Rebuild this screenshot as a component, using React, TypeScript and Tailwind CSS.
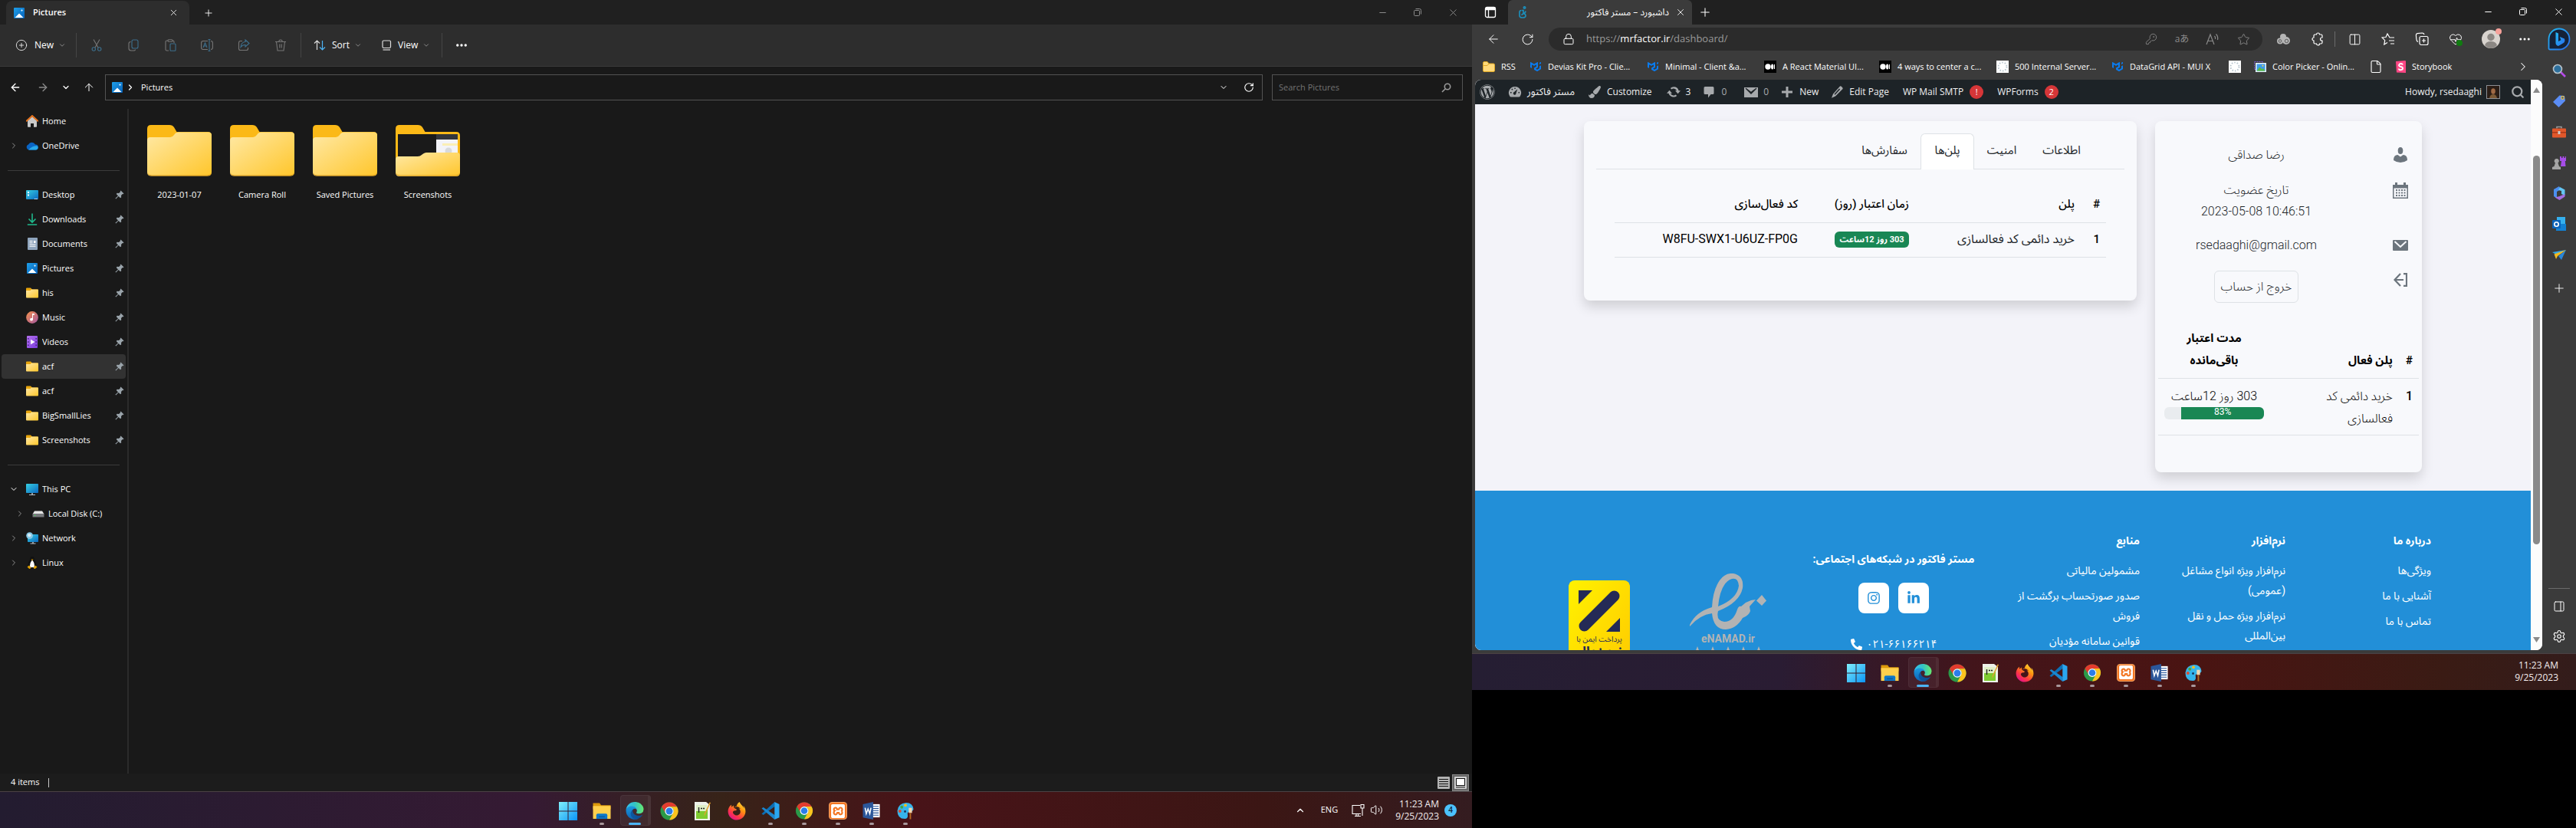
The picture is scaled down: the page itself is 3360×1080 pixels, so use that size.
import React from "react";
import {
  ArrowLeft, ArrowRight, ArrowUp, ChevronDown, ChevronRight, ChevronUp, Ellipsis, X, Plus, Minus,
  Star, KeyRound, Lock, RotateCw, Columns2, CirclePlus, Settings, PanelRight, Search, File,
  HeartPulse, Volume2,
} from "lucide-react";
import { FaWordpress, FaFirefoxBrowser, FaInstagram, FaLinkedinIn, FaPhoneAlt, FaPaintBrush } from "react-icons/fa";
import { SiMui, SiXampp } from "react-icons/si";

type Kids = { children?: React.ReactNode };

/* ---------- shared drawings ---------- */

const Defs = () => (
  <svg className="absolute h-0 w-0" aria-hidden="true">
    <defs>
      <linearGradient id="fold" x1="0" y1="0" x2="1" y2="1"><stop offset="0" stopColor="#ffe9a6" /><stop offset="1" stopColor="#ffc62b" /></linearGradient>
      <linearGradient id="pic" x1="0" y1="0" x2="1" y2="1"><stop offset="0" stopColor="#1fa0ea" /><stop offset="1" stopColor="#0560b8" /></linearGradient>
      <linearGradient id="win" x1="0" y1="0" x2="1" y2="1"><stop offset="0" stopColor="#80f0fc" /><stop offset="1" stopColor="#0a93f5" /></linearGradient>
      <linearGradient id="desk" x1="0" y1="0" x2="1" y2="1"><stop offset="0" stopColor="#36cfe2" /><stop offset="1" stopColor="#0b68c0" /></linearGradient>
      <linearGradient id="music" x1="0" y1="0" x2="1" y2="1"><stop offset="0" stopColor="#f5914c" /><stop offset="1" stopColor="#a457a0" /></linearGradient>
      <linearGradient id="video" x1="0" y1="0" x2="1" y2="1"><stop offset="0" stopColor="#b572ee" /><stop offset="1" stopColor="#7a3bdc" /></linearGradient>
      <linearGradient id="edgeA" x1="0" y1="0" x2="1" y2="0"><stop offset="0" stopColor="#0c59a4" /><stop offset="1" stopColor="#114a8b" /></linearGradient>
      <linearGradient id="edgeB" x1="0" y1="0" x2="0" y2="1"><stop offset="0" stopColor="#1b9de2" /><stop offset="1" stopColor="#0d62b4" /></linearGradient>
      <linearGradient id="edgeC" x1="0" y1="0" x2="1" y2="0"><stop offset="0" stopColor="#35c1f1" /><stop offset="0.5" stopColor="#34c3c4" /><stop offset="1" stopColor="#66eb6e" /></linearGradient>
      <linearGradient id="fire" x1="1" y1="0" x2="0.3" y2="1"><stop offset="0" stopColor="#fff44f" /><stop offset="0.4" stopColor="#ff980e" /><stop offset="0.75" stopColor="#ff3647" /><stop offset="1" stopColor="#e31587" /></linearGradient>
      <linearGradient id="bing" x1="0" y1="0" x2="1" y2="1"><stop offset="0" stopColor="#22b8f0" /><stop offset="1" stopColor="#2a6ff0" /></linearGradient>
    </defs>
  </svg>
);

const PictureIcon = () => (
  <svg viewBox="0 0 14 14" className="h-3.5 w-3.5 shrink-0">
    <rect width="14" height="14" rx="1" fill="url(#pic)" />
    <path d="M1.5 13 7 7.5l5.5 5.5z" fill="#fff" /><circle cx="10.5" cy="3.6" r="1.1" fill="#e5f5ff" />
  </svg>
);

const SmallFolder = () => (
  <svg viewBox="0 0 16 14" className="h-[14px] w-4">
    <path d="M0 1.5Q0 .5 1 .5h5l2 2h7q1 0 1 1V9H0z" fill="#e8a50c" />
    <path d="M0 4h5.5l1.5-1.5h8q1 0 1 1v9q0 1-1 1H1q-1 0-1-1z" fill="url(#fold)" />
  </svg>
);

const BigFolder = ({ preview = false }: { preview?: boolean }) => (
  <svg viewBox="0 0 84 67" className="h-[67px] w-[84px]">
    <path d="M0 5Q0 0 5 0h24q4 0 6 3l3.5 6H79q5 0 5 5v40H0z" fill="#fbb917" />
    {preview ? (
      <g>
        <rect x="3" y="12" width="78" height="34" fill="#1a1a1a" />
        <rect x="53" y="12" width="28" height="7" fill="#33353b" /><rect x="53" y="19" width="28" height="27" fill="#f3f3f8" />
        <rect x="61" y="24" width="20" height="3" fill="#fbeeb5" /><circle cx="69" cy="34" r="4.500" fill="#d7d9dc" />
        <path d="M0 45q0-4 4-4h25q3 0 5-2l2-1.500q2-1.500 4-1.500h40q4 0 4 4v22q0 5-5 5H5q-5 0-5-5z" fill="url(#fold)" />
      </g>
    ) : (
      <path d="M0 20q0-4 4-4h26q3 0 5-3l1.500-2q1.500-1.500 4-1.500H80q4 0 4 4v48q0 5-5 5H5q-5 0-5-5z" fill="url(#fold)" />
    )}
    <path d="M1 63.500q1 2.500 5 2.500h72q4 0 5-2.500" fill="none" stroke="#d79a1c" />
  </svg>
);

const Pin = () => (
  <svg viewBox="0 0 12 12" className="h-3 w-3" fill="#9aa4ab"><path d="M7.500 0.500 11.500 4.500 10.500 5.200 9.800 5 8 7l.2 2.300-1.200 1L4.600 8 1.200 11.600l-.8-.8L4 7.400 1.700 5l1-1.200L5 4l2-1.800-.2-.8z" /></svg>
);

const HomeIcon = () => (
  <svg viewBox="0 0 16 16" className="h-4 w-4"><path d="M2 7.500 8 2l6 5.500V15q0 .8-.8.8H10V11H6v4.800H2.800Q2 15.800 2 15z" fill="#c9c9c9" /><path d="M.6 7.800 8 1l7.400 6.800" fill="none" stroke="#e8731c" strokeWidth="1.900" strokeLinecap="round" /></svg>
);
const CloudIcon = () => (
  <svg viewBox="0 0 16 11" className="h-[11px] w-4"><path d="M4 10.500A3.700 3.700 0 0 1 3 3.400 5 5 0 0 1 12 3.500a3.500 3.500 0 0 1 .5 7z" fill="#0a64c4" /><path d="M3 10.500Q8 5 14.500 5.200A3 3 0 0 1 13 10.500z" fill="#28a8ea" /></svg>
);
const DesktopIcon = () => (
  <svg viewBox="0 0 16 13" className="h-[13px] w-4"><rect width="16" height="12" rx="1" fill="url(#desk)" /><path d="M2 2h2v2H2zM2 5.500h2v2H2zM11 11h1.500v1H11zM13.200 11h1.500v1h-1.500z" fill="#fff" /></svg>
);
const DownloadIcon = () => (
  <svg viewBox="0 0 14 16" className="h-4 w-3.5" fill="none" stroke="#1fb98c" strokeWidth="1.600"><path d="M7 .5V12M2.500 7.500 7 12l4.500-4.500M.8 15h12.400" /></svg>
);
const DocIcon = () => (
  <svg viewBox="0 0 13 16" className="h-4 w-[13px]"><rect width="13" height="16" rx="1" fill="#8fa5bd" /><path d="M2.500 4h4v1h-4zM8 4h2.500v3H8zM2.500 6.300h4v1h-4zM2.500 8.500h8v1h-8zM2.500 10.700h8v1h-8z" fill="#fff" /></svg>
);
const MusicIcon = () => (
  <svg viewBox="0 0 16 16" className="h-4 w-4"><circle cx="8" cy="8" r="7.900" fill="url(#music)" /><path d="M8 3h2.800v2H9v5.600A1.900 1.900 0 1 1 8 9z" fill="#fff" /></svg>
);
const VideoIcon = () => (
  <svg viewBox="0 0 14 16" className="h-4 w-3.5"><rect width="14" height="16" rx="1" fill="url(#video)" /><path d="M1 3h1.600v1.600H1zM1 7.200h1.600v1.600H1zM1 11.400h1.600V13H1zM11.400 3H13v1.600h-1.600zM11.400 7.200H13v1.600h-1.600zM11.400 11.400H13V13h-1.600z" fill="#43207e" /><path d="m5 4.800 5.500 3.200L5 11.200z" fill="#fff" /></svg>
);
const PcIcon = () => (
  <svg viewBox="0 0 16 15" className="h-[15px] w-4"><rect width="16" height="12" rx=".8" fill="url(#desk)" /><path d="M7.200 12h1.600v2H12v1H4v-1h3.200z" fill="#b5bcc2" /></svg>
);
const DiskIcon = () => (
  <svg viewBox="0 0 16 9" className="h-[9px] w-4"><path d="M3 .5h10l2.500 4H.5z" fill="#e6e6e6" /><rect x=".5" y="4" width="15" height="4.500" rx=".6" fill="#77797c" /><circle cx="3.500" cy="6.300" r=".8" fill="#3ddc54" /></svg>
);
const NetIcon = () => (
  <svg viewBox="0 0 16 16" className="h-4 w-4"><rect x="2" y="3" width="14" height="10" rx=".8" fill="url(#desk)" /><path d="M8.200 13h1.600v1.500h2.700v1h-7v-1h2.700z" fill="#b5bcc2" /><circle cx="4.600" cy="4.600" r="4.400" fill="#86c8e6" /><path d="M2 3q2.500-2 4 0t-1 3q-3 1-3-3" fill="#d6eef8" /></svg>
);
const LinuxIcon = () => (
  <svg viewBox="0 0 14 16" className="h-4 w-3.5"><path d="M7 0Q10 0 10 4q3 4 2.500 9l-3 2h-5l-3-2Q1 8 4 4 4 0 7 0" fill="#111" /><path d="M7 4.500Q11 9 9.500 14h-5Q3 9 7 4.500" fill="#fff" /><path d="M5.500 3.600h3L7 5.200zM.5 13.500l2.500-2 2.500 3q-1 1.800-2.500 1.300zM13.500 13.500l-2.500-2-2.500 3q1 1.800 2.500 1.300z" fill="#e2a100" /></svg>
);

/* ---------- taskbar ---------- */

const Edge = () => (
  <svg viewBox="0 0 256 256" className="h-6 w-6">
    <path d="M231 190.500c-3.400 1.800-6.900 3.400-10.500 4.700a101.500 101.500 0 0 1-35.600 6.400c-47 0-87.900-32.300-87.900-73.800.1-11.300 6.300-21.700 16.200-27.100C70.700 102.500 59.800 146.800 59.800 172.800c0 73.400 67.700 80.900 82.300 80.900 7.900 0 19.800-2.300 26.900-4.600l1.300-.4a127.900 127.900 0 0 0 66.600-52.800 4 4 0 0 0-5.900-5.400z" fill="url(#edgeA)" />
    <path d="M105.700 241.400a79.200 79.200 0 0 1-22.700-21.300 80.700 80.700 0 0 1 29.500-120c3.200-1.500 8.500-4.100 15.600-4a32.400 32.400 0 0 1 25.700 13 32 32 0 0 1 6.400 18.700c0-.2 24.500-79.600-80-79.600C36.300 48.200.3 89.800.3 126.400a130.200 130.200 0 0 0 12.100 56 128 128 0 0 0 156.400 67.100 75.500 75.500 0 0 1-62.800-8z" fill="url(#edgeB)" />
    <path d="M152.300 148.900c-.8 1.100-3.300 2.500-3.300 5.700 0 2.600 1.700 5.100 4.700 7.200 14.400 10 41.500 8.700 41.500 8.700 10.700 0 21.100-2.900 30.300-8.300A61.400 61.400 0 0 0 256 109.200c.3-22.400-8-37.300-11.300-43.900C223.500 23.900 177.700 0 128 0A128 128 0 0 0 0 126.200c.5-36.500 36.800-66 80-66 3.500 0 23.500.3 42 10.100 16.300 8.600 24.900 18.900 30.800 29.200 6.200 10.700 7.300 24.100 7.300 29.500 0 5.300-2.700 13.300-7.800 19.900z" fill="url(#edgeC)" />
  </svg>
);
const Chrome = () => (
  <svg viewBox="0 0 24 24" className="h-6 w-6">
    <circle cx="12" cy="12" r="11.500" fill="#2a9a48" />
    <path d="M2.040 6.250A11.500 11.500 0 0 1 21.960 6.250H12A5.500 5.500 0 0 0 7.240 14.750z" fill="#e33b2e" />
    <path d="M21.960 6.250H12A5.500 5.500 0 0 1 16.760 14.750L12 23.500A11.500 11.500 0 0 0 21.960 6.250" fill="#fcc31e" />
    <circle cx="12" cy="12" r="5.700" fill="#fff" /><circle cx="12" cy="12" r="4.500" fill="#2b7de9" />
  </svg>
);
const Start = () => (
  <svg viewBox="0 0 24 24" className="h-6 w-6"><path d="M0 0h11.500v11.500H0zM12.500 0H24v11.500H12.500zM0 12.500h11.500V24H0zM12.500 12.500H24V24H12.500z" fill="url(#win)" /></svg>
);
const ExplorerIcon = () => (
  <svg viewBox="0 0 24 24" className="h-6 w-6"><path d="M0 1.500h9l2 3h13V10H0z" fill="#dd9a0b" /><path d="M0 5.500h24V23H0z" fill="#ffd04d" /><path d="M4.500 23v-5q0-2 2-2h11q2 0 2 2v5z" fill="#0f78c8" /><path d="M8 19.500h8V21H8z" fill="#0a5a9c" /></svg>
);
const Notepad = () => (
  <svg viewBox="0 0 24 24" className="h-6 w-6"><path d="M1 0h15l5 4v20H1z" fill="#eef2ea" /><path d="M3 10h15v12H3z" fill="#7ecb30" /><path d="M3 4h14v8H3z" fill="#dff0c8" /><path d="M6.500 14V7M9 8.500h2M12 8.500h2" stroke="#222" strokeWidth="1.400" /><path d="m22 1-7 15-1.500 3 .3-3.800L20.500.5z" fill="#e2a22f" /></svg>
);
const VsCode = () => (
  <svg viewBox="0 0 24 24" className="h-6 w-6"><path d="M17.500 0 0 16.200l2.200 1.500L18 6z" fill="#0c6fb5" /><path d="M0 8.800 17.500 24l.5-6L2.200 7.300z" fill="#1a86cf" /><path d="M17.500 0 24 3v18l-6.500 3z" fill="#2aa6f0" /></svg>
);
const Xampp = () => (
  <span className="flex h-6 w-6 items-center justify-center rounded-sm border border-[#f2a568] bg-[#f37623]"><SiXampp className="h-[18px] w-[18px]" color="#fff" /></span>
);
const Word = () => (
  <svg viewBox="0 0 24 24" className="h-6 w-6"><path d="M13 3h10v18H13z" fill="#fff" /><path d="M14 6h7.500M14 9h7.500M14 12h7.500M14 15h7.500M14 18h7.500" stroke="#2b579a" strokeWidth="1.200" /><path d="M0 3 14 0v24L0 21z" fill="#2b579a" /><path d="m3 8 1.600 8L7 9.500 9.400 16 11 8" fill="none" stroke="#fff" strokeWidth="1.600" /></svg>
);
const Paint = () => (
  <svg viewBox="0 0 24 24" className="h-6 w-6"><path d="M13 1q9 0 10 9-1 3-5 3-4 1-3 4 1 6-4 6Q1 23 1 12 2 2 13 1" fill="#36b4ea" /><circle cx="4.500" cy="12.500" r="2" fill="#e04a2f" /><circle cx="7" cy="7" r="2" fill="#4aa53c" /><circle cx="12" cy="4.500" r="2" fill="#f5bc1c" /><circle cx="11.500" cy="13" r="1.500" fill="#17355c" /><path d="M16.500 8h4.500v7h-4.500z" fill="#f1d6b0" /><path d="M17.700 15h2v8.500h-2z" fill="#b5671f" /></svg>
);

const apps: { name: string; icon: React.ReactNode; state: "" | "open" | "active" }[] = [
  { name: "Start", icon: <Start />, state: "" },
  { name: "File Explorer", icon: <ExplorerIcon />, state: "open" },
  { name: "Edge", icon: <Edge />, state: "active" },
  { name: "Chrome", icon: <Chrome />, state: "" },
  { name: "Notepad++", icon: <Notepad />, state: "" },
  { name: "Firefox", icon: <FaFirefoxBrowser className="h-6 w-6" style={{ fill: "url(#fire)" }} />, state: "" },
  { name: "VS Code", icon: <VsCode />, state: "open" },
  { name: "Chrome profile", icon: <Chrome />, state: "open" },
  { name: "XAMPP", icon: <Xampp />, state: "open" },
  { name: "Word", icon: <Word />, state: "open" },
  { name: "Paint", icon: <Paint />, state: "open" },
];

const Clock = () => (
  <button type="button" className="flex flex-col items-end text-xs leading-4 text-[#f3eded]"><span>11:23 AM</span><span>9/25/2023</span></button>
);

const Taskbar = ({ children, className }: Kids & { className: string }) => (
  <footer className={"grid h-12 shrink-0 grid-cols-[1fr_auto_1fr] border-t border-[#4b4144] " + className}>
    <span />
    <nav className="flex pl-0.5" aria-label="Taskbar">
      {apps.map((a) => (
        <button key={a.name} type="button" aria-label={a.name} className="flex h-full w-11 items-start justify-center pt-1">
          <span className={"flex h-10 w-10 flex-col items-center pt-2 " + (a.state === "active" ? "rounded border border-r-4 border-white/5 bg-white/5" : "border border-transparent")}>
            {a.icon}
            {a.state === "open" && <i className="mt-1 h-[3px] w-1.5 shrink-0 rounded-full bg-[#a8989c]" />}
            {a.state === "active" && <i className="mt-1 h-[3px] w-4 shrink-0 rounded-full bg-[#4cb4f5]" />}
          </span>
        </button>
      ))}
    </nav>
    <div className="flex items-center justify-end">{children}</div>
  </footer>
);

/* ---------- file explorer ---------- */

const WinControls = ({ className }: { className: string }) => (
  <div className={"ml-auto flex h-[30px] " + className}>
    <button type="button" aria-label="Minimize" className="flex w-[46px] items-center justify-center"><Minus size={13} strokeWidth={2} /></button>
    <button type="button" aria-label="Restore" className="flex w-[46px] items-center justify-center">
      <svg viewBox="0 0 12 12" className="h-3 w-3" fill="none" stroke="currentColor"><rect x="1.500" y="3.500" width="7" height="7" rx="1" /><path d="M3.500 1.500h5q2 0 2 2v5" /></svg>
    </button>
    <button type="button" aria-label="Close" className="flex w-[46px] items-center justify-center"><X size={15} strokeWidth={1.500} /></button>
  </div>
);

const Sep = () => <span className="h-8 w-px shrink-0 bg-[#454545]" />;

const TinyIcon = ({ children }: Kids) => (
  <svg viewBox="0 0 16 16" className="h-4 w-4" fill="none" stroke="#767676" strokeWidth="1.100">{children}</svg>
);

const editTools: { name: string; icon: React.ReactNode }[] = [
  { name: "Cut", icon: <TinyIcon><path d="M4 .5 10 11M12 .5 6 11" /><circle cx="4.300" cy="13" r="2.200" stroke="#3d6f8d" /><circle cx="11.700" cy="13" r="2.200" stroke="#3d6f8d" /></TinyIcon> },
  { name: "Copy", icon: <TinyIcon><rect x="6" y="1" width="8" height="11" rx="2" stroke="#3d6f8d" /><path d="M4.500 3.500Q2 3.500 2 6v6q0 3 3 3h3q2.500 0 2.500-1.500" /></TinyIcon> },
  { name: "Paste", icon: <TinyIcon><path d="M6 15H3.500Q2 15 2 13.500v-10Q2 2 3.500 2H5M11 2h.5Q13 2 13 3.500V5" /><rect x="5" y=".8" width="6" height="2.400" rx="1" /><rect x="8" y="6" width="7" height="9.300" rx="1" stroke="#3d6f8d" /></TinyIcon> },
  { name: "Rename", icon: <TinyIcon><path d="M9 2.500H3Q.6 2.500.6 5v6q0 2.500 2.400 2.500h6M13 2.500q2.400 0 2.400 2.500v6q0 2.500-2.400 2.500" /><path d="M11 .5v15M9.500.5h3M9.500 15.500h3M3 11l2.500-6L8 11M4 9h3" stroke="#3d6f8d" /></TinyIcon> },
  { name: "Share", icon: <TinyIcon><path d="M6 2.500H3.500Q1.500 2.500 1.500 5v7.500q0 2 2 2h8q2 0 2-2V11" /><path d="M10 1l5 4.500L10 10V7.500q-4 0-6 3 .5-6.500 6-7z" stroke="#3d6f8d" /></TinyIcon> },
  { name: "Delete", icon: <TinyIcon><path d="M1 3.500h14M5.800 3.500Q5.800 1 8 1t2.200 2.500M2.500 3.500 4 15h8l1.500-11.500M6.800 6.500v5M9.200 6.500v5" /></TinyIcon> },
];

type Side = { label: string; icon: React.ReactNode; selected?: boolean; arrow?: "right" | "down"; nested?: boolean; pin?: boolean };

const SideItem = ({ label, icon, selected, arrow, nested, pin }: Side) => (
  <li>
    <a href="#" className={"flex h-8 items-center pr-0.5 text-[11px] text-white " + (nested ? "pl-4 " : "pl-2 ") + (selected ? "rounded-sm bg-[#323232]" : "")}>
      <span className="flex w-[24px] shrink-0 justify-start pl-0.5 text-[#8f8f8f]">
        {arrow === "right" && <ChevronRight size={12} strokeWidth={2} />}
        {arrow === "down" && <ChevronDown size={12} strokeWidth={2} color="#fff" />}
      </span>
      <span className="flex w-4 shrink-0 justify-center">{icon}</span>
      <span className="ml-[5px] flex-1 truncate">{label}</span>
      {pin && <Pin />}
    </a>
  </li>
);

const homeItems: Side[] = [
  { label: "Home", icon: <HomeIcon /> },
  { label: "OneDrive", icon: <CloudIcon />, arrow: "right" },
];
const pinned: Side[] = [
  { label: "Desktop", icon: <DesktopIcon /> },
  { label: "Downloads", icon: <DownloadIcon /> },
  { label: "Documents", icon: <DocIcon /> },
  { label: "Pictures", icon: <PictureIcon /> },
  { label: "his", icon: <SmallFolder /> },
  { label: "Music", icon: <MusicIcon /> },
  { label: "Videos", icon: <VideoIcon /> },
  { label: "acf", icon: <SmallFolder />, selected: true },
  { label: "acf", icon: <SmallFolder /> },
  { label: "BigSmallLies", icon: <SmallFolder /> },
  { label: "Screenshots", icon: <SmallFolder /> },
];
const devices: Side[] = [
  { label: "This PC", icon: <PcIcon />, arrow: "down" },
  { label: "Local Disk (C:)", icon: <DiskIcon />, arrow: "right", nested: true },
  { label: "Network", icon: <NetIcon />, arrow: "right" },
  { label: "Linux", icon: <LinuxIcon />, arrow: "right" },
];

const Rule = () => <li className="flex h-8 items-center pl-2"><hr className="w-[146px] border-[#3b3b3b]" /></li>;

const Explorer = () => (
  <section className="flex h-screen min-w-0 flex-col bg-[#191919] text-[11px] text-white">
    <header className="flex h-8 shrink-0 bg-[#202020] pt-px pl-2">
      <div className="flex h-[31px] w-[239px] items-center rounded-t-lg bg-[#2d2d2d] pr-3.5 pl-2.5">
        <PictureIcon />
        <span className="ml-[11px] flex-1 font-semibold">Pictures</span>
        <button type="button" aria-label="Close tab"><X size={13} strokeWidth={1.500} /></button>
      </div>
      <button type="button" aria-label="New tab" className="ml-[18px]"><Plus size={14} strokeWidth={1.500} /></button>
      <WinControls className="pr-0.5 text-[#8a8a8a]" />
    </header>
    <div className="flex h-[55px] shrink-0 items-center border-b border-[#3b3b3b] bg-[#2d2d2d]">
      <button type="button" className="flex w-[99px] items-center pl-5">
        <CirclePlus size={16} strokeWidth={1.200} /><span className="ml-[9px] text-xs">New</span><ChevronDown size={10} className="ml-1.5 text-[#9b9b9b]" />
      </button>
      <Sep />
      <div className="flex w-[292px] pl-0.5">
        {editTools.map((t) => <button key={t.name} type="button" aria-label={t.name} className="flex h-8 w-12 items-center justify-center">{t.icon}</button>)}
      </div>
      <Sep />
      <button type="button" className="flex w-[104px] items-center pl-4">
        <svg viewBox="0 0 16 14" className="h-3.5 w-4" fill="none" strokeWidth="1.200"><path d="M4.500 13V1M1 4.500 4.500 1 8 4.500" stroke="#ddd" /><path d="M11.500 1v12M8 9.500l3.500 3.500L15 9.500" stroke="#4cb4f5" /></svg>
        <span className="ml-2 text-xs">Sort</span><ChevronDown size={10} className="ml-1.5 text-[#9b9b9b]" />
      </button>
      <button type="button" className="flex w-[79px] items-center">
        <svg viewBox="0 0 14 14" className="h-3.5 w-3.5" fill="none" stroke="#ddd" strokeWidth="1.200"><rect x="2" y="1" width="10.500" height="9.500" rx="1.500" /><path d="M2.500 13h9.500" /></svg>
        <span className="ml-2 text-xs">View</span><ChevronDown size={10} className="ml-1.5 text-[#9b9b9b]" />
      </button>
      <Sep />
      <button type="button" aria-label="More" className="ml-4"><Ellipsis size={18} strokeWidth={2.500} /></button>
    </div>
    <div className="flex h-[55px] shrink-0 items-start pt-2.5 pr-3">
      <div className="flex h-[34px] w-[137px] shrink-0 items-center pl-3">
        <button type="button" aria-label="Back" className="w-9"><ArrowLeft size={16} /></button>
        <button type="button" aria-label="Forward" className="w-8 text-[#8a8a8a]"><ArrowRight size={16} /></button>
        <button type="button" aria-label="Recent" className="w-7"><ChevronDown size={12} strokeWidth={2.500} /></button>
        <button type="button" aria-label="Up"><ArrowUp size={16} strokeWidth={1.500} /></button>
      </div>
      <nav aria-label="Address" className="flex h-[34px] flex-1 items-center border border-[#535353] pr-2.5 pl-2">
        <PictureIcon />
        <ChevronRight size={12} strokeWidth={2.500} className="ml-1" />
        <a href="#" className="ml-2 flex-1">Pictures</a>
        <button type="button" aria-label="Previous locations"><ChevronDown size={12} strokeWidth={2} /></button>
        <button type="button" aria-label="Refresh" className="ml-5"><RotateCw size={14} /></button>
      </nav>
      <label className="ml-3 flex h-[34px] w-[249px] items-center border border-[#535353] pr-3.5 pl-2">
        <input type="search" placeholder="Search Pictures" aria-label="Search Pictures" className="min-w-0 flex-1 bg-transparent outline-none placeholder:text-[#747474]" />
        <svg viewBox="0 0 13 13" className="h-[13px] w-[13px]" fill="none" stroke="#9a9a9a" strokeWidth="1.600"><circle cx="8" cy="5" r="3.700" /><path d="M5.300 7.700 1 12" /></svg>
      </label>
    </div>
    <div className="flex min-h-0 flex-1">
      <aside className="w-[168px] shrink-0 border-r-2 border-[#2b2b2b]">
        <ul className="w-[164px] pl-0.5">
          {homeItems.map((i) => <SideItem key={i.label} {...i} />)}
          <Rule />
          {pinned.map((i, n) => <SideItem key={n} {...i} pin />)}
          <Rule />
          {devices.map((i) => <SideItem key={i.label} {...i} />)}
        </ul>
      </aside>
      <main className="flex flex-1 items-start pt-[21px] pl-3">
        {["2023-01-07", "Camera Roll", "Saved Pictures", "Screenshots"].map((n) => (
          <button key={n} type="button" className="flex w-[108px] flex-col items-center">
            <BigFolder preview={n === "Screenshots"} />
            <span className="mt-4 leading-4">{n}</span>
          </button>
        ))}
      </main>
    </div>
    <div className="flex h-[23px] shrink-0 items-center bg-[#1c1c1c] pr-1 pl-3.5">
      <span>4 items</span><span className="ml-3 h-3 w-px bg-[#c9c9c9]" />
      <button type="button" aria-label="Details view" className="ml-auto">
        <svg viewBox="0 0 16 16" className="h-4 w-4"><rect width="16" height="16" rx="1" fill="#b3b3b3" /><path d="M2 3.500h12M2 6.500h12M2 9.500h12M2 12.500h12" stroke="#111" /></svg>
      </button>
      <button type="button" aria-label="Large icons view" className="ml-[3px] flex h-[22px] w-[22px] items-center justify-center border border-[#8a8a8a] bg-[#666]">
        <svg viewBox="0 0 16 16" className="h-4 w-4"><rect width="16" height="16" rx="1" fill="#d0d0d0" /><rect x="2.500" y="2.500" width="11" height="9" fill="#fff" stroke="#111" /><path d="M2 13.800h12" stroke="#111" /></svg>
      </button>
    </div>
    <Taskbar className="bg-[linear-gradient(90deg,#231c30_0%,#351a33_36%,#372318_49%,#481318_62%,#3b1614_86%,#341c20_100%)]">
      <ChevronUp size={14} strokeWidth={2} />
      <span className="ml-5 text-[11px]">ENG</span>
      <svg viewBox="0 0 17 17" className="ml-[18px] h-[17px] w-[17px]" fill="none" stroke="#fff" strokeWidth="1.100"><path d="M11 2.500H1v11h11M4 16.500h8M6 14v2M8.500 14v2" /><path d="M12 1.500h4V6h-4zM14 6v10" /></svg>
      <Volume2 size={17} strokeWidth={1.400} className="mr-4 ml-[7px]" />
      <Clock />
      <span className="mr-5 ml-[7px] flex h-4 w-4 items-center justify-center rounded-full bg-[#4cc2ff] text-[10px] font-semibold text-[#123]">4</span>
    </Taskbar>
  </section>
);

/* ---------- browser chrome ---------- */

const ToolBtn = ({ name, children, narrow }: Kids & { name: string; narrow?: boolean }) => (
  <button type="button" aria-label={name} className={"flex h-8 shrink-0 items-center justify-center " + (narrow ? "w-10" : "w-11")}>{children}</button>
);

const MuiIcon = () => <SiMui size={16} color="#0a7cf0" className="px-px" />;
const MediumIcon = () => (
  <svg viewBox="0 0 16 16" className="h-4 w-4"><rect width="16" height="16" fill="#000" /><circle cx="5" cy="8" r="3.700" fill="#fff" /><ellipse cx="10.700" cy="8" rx="1.700" ry="3.500" fill="#fff" /><path d="M13.500 5v6" stroke="#fff" /></svg>
);
const DotsIcon = () => (
  <svg viewBox="0 0 16 16" className="h-4 w-4"><rect width="16" height="16" fill="#fff" /><circle cx="8" cy="8" r="5.500" fill="none" stroke="#b9c6cf" strokeWidth="2" strokeDasharray="1.500 2" /></svg>
);
const ColorIcon = () => (
  <svg viewBox="0 0 16 14" className="h-3.5 w-4"><rect x=".5" y=".5" width="11" height="10" fill="none" stroke="#7a5fd0" strokeDasharray="2 1" /><rect x="2" y="2" width="14" height="12" fill="#e8f2fa" /><rect x="3.500" y="3.500" width="11" height="9" fill="#3f9be8" /><path d="m3.500 12.500 4-5 3 3 1.500-1.500 2.500 3.500z" fill="#5dbb3f" /><circle cx="11.500" cy="5.800" r="1" fill="#ffd84a" /></svg>
);
const StoryIcon = () => (
  <svg viewBox="0 0 13 16" className="h-4 w-[13px]"><path d="M0 1 12 0q1 0 1 1v15L1 15.500z" fill="#ff4785" /><path d="M9 5.500Q8.500 4 6.500 4T4 6q0 1.500 2.500 2T9 10.200 6.500 12.200 3.800 10.500" fill="none" stroke="#fff" strokeWidth="1.800" /></svg>
);
const RssFolder = () => (
  <svg viewBox="0 0 16 14" className="h-3.5 w-4"><path d="M.5 2q0-1.500 1.500-1.500h4L8 3h6q1.500 0 1.500 1.500V12q0 1.500-1.500 1.500H2Q.5 13.500.5 12z" fill="#ffd97a" stroke="#e0a826" /><path d="M1 5.500h5L8 3" fill="none" stroke="#e0a826" /></svg>
);

const bookmarks: { icon: React.ReactNode; label?: string; width?: string }[] = [
  { icon: <RssFolder />, label: "RSS", width: "w-5" },
  { icon: <MuiIcon />, label: "Devias Kit Pro - Clie...", width: "w-28" },
  { icon: <MuiIcon />, label: "Minimal - Client &a...", width: "w-28" },
  { icon: <MediumIcon />, label: "A React Material UI...", width: "w-[109px]" },
  { icon: <MediumIcon />, label: "4 ways to center a c...", width: "w-28" },
  { icon: <DotsIcon />, label: "500 Internal Server...", width: "w-[109px]" },
  { icon: <MuiIcon />, label: "DataGrid API - MUI X", width: "w-28" },
  { icon: <DotsIcon /> },
  { icon: <ColorIcon />, label: "Color Picker - Onlin...", width: "w-[109px]" },
  { icon: <File size={18} strokeWidth={1.500} color="#fff" /> },
  { icon: <StoryIcon />, label: "Storybook", width: "w-14" },
];

const WpItem = ({ icon, children, className = "" }: Kids & { icon?: React.ReactNode; className?: string }) => (
  <a href="#" className={"flex shrink-0 items-center gap-1.5 text-[#f0f0f1] " + className}>{icon}{children}</a>
);

const Dash = ({ d }: { d: string }) => <svg viewBox="0 0 20 20" className="h-5 w-5 shrink-0" fill="#a7aaad" fillRule="evenodd"><path d={d} /></svg>;

const Count = ({ children }: Kids) => <span className="ml-0.5 flex h-[18px] w-[18px] items-center justify-center rounded-full bg-[#d63638] text-[11px] text-white">{children}</span>;

const AdminBar = () => (
  <nav aria-label="Admin bar" className="flex h-8 items-center bg-[#1d2327] pr-2 pl-1.5 text-xs">
    <a href="#" aria-label="WordPress"><FaWordpress size={20} color="#a7aaad" /></a>
    <WpItem className="ml-4" icon={<Dash d="M10 3a8 8 0 0 0-7 12q.5 1.500 2 1.500h10q1.500 0 2-1.500a8 8 0 0 0-7-12M9.300 4.500h1.500V6H9.300zM5.300 6.500 6.400 5.500 7.500 6.600 6.400 7.700zM4 10h1.600v1.500H4zM14.500 10H16v1.500h-1.500zM13.300 6.200 11.500 11.500A1.900 1.900 0 1 1 9 10z" />}><span className="text-[13px]">مستر فاکتور</span></WpItem>
    <WpItem className="ml-[18px] gap-2" icon={<FaPaintBrush size={16} color="#a7aaad" />}>Customize</WpItem>
    <WpItem className="ml-[18px]" icon={<Dash d="M10.200 3.300a6.700 6.700 0 0 1 6.400 5H19l-3.500 4L12 8.300h2.100A4.400 4.400 0 0 0 7.300 6.500L5.800 5a6.700 6.700 0 0 1 4.400-1.700M4.500 7.700 8 11.700H6a4.400 4.400 0 0 0 6.700 1.900l1.500 1.500a6.700 6.700 0 0 1-10.700-3.400H1z" />}>3</WpItem>
    <WpItem className="ml-[14px]" icon={<Dash d="M5 3h10q1.500 0 1.500 1.500v7Q16.500 13 15 13h-2.500L9 17.500V13H5q-1.500 0-1.500-1.500v-7Q3.500 3 5 3" />}><span className="text-[#a7aaad]">0</span></WpItem>
    <WpItem className="ml-[22px]" icon={<Dash d="M1 4h18v13H1zM2.500 5.500l7.500 7.500 7.500-7.500-1-.8-6.500 5-6.500-5z" />}><span className="text-[#a7aaad]">0</span></WpItem>
    <WpItem className="ml-[14px]" icon={<Dash d="M8.500 3h3v5.500H17v3h-5.500V17h-3v-5.500H3v-3h5.500z" />}>New</WpItem>
    <WpItem className="ml-[14px]" icon={<Dash d="M14 2.500q1-.5 2 .5l1 1q1 1 .5 2L8 15.500l-5 2.200L5 12.500zM13 5.500 6.500 12.800l1 1L14.200 6.500z" />}>Edit Page</WpItem>
    <WpItem className="ml-[18px]">WP Mail SMTP<Count>!</Count></WpItem>
    <WpItem className="ml-[18px]">WPForms<Count>2</Count></WpItem>
    <WpItem className="ml-auto">Howdy, rsedaaghi
      <svg viewBox="0 0 18 18" className="h-[18px] w-[18px]"><rect width="18" height="18" fill="#2a1d16" stroke="#8c8f94" strokeWidth="2" /><path d="M4 17q1-5 5-5t5 5z" fill="#7c5a36" /><ellipse cx="9" cy="8" rx="2.800" ry="3.700" fill="#a06a45" /></svg>
    </WpItem>
    <button type="button" aria-label="Search" className="ml-3.5"><Search size={18} strokeWidth={3} color="#a7aaad" /></button>
  </nav>
);

/* ---------- dashboard page ---------- */

const card = "rounded-lg bg-[#f8f9fc] shadow-[0_8px_16px_rgba(0,0,0,0.15)]";

const PlansCard = () => (
  <article className={card + " h-[234px] min-w-0 flex-1 px-4 pt-4"}>
    <div role="tablist" className="flex border-b border-[#dee2e6] pr-10 text-[15px] leading-7 text-[#212529]">
      {[["اطلاعات", "w-[84px]"], ["امنیت", "w-[72px]"], ["پلن‌ها", "w-[70px]"], ["سفارش‌ها", "w-[94px]"]].map(([t, w]) => (
        <button key={t} type="button" role="tab" aria-selected={t === "پلن‌ها"} className={w + " -mb-px h-[47px] whitespace-nowrap pb-1 " + (t === "پلن‌ها" ? "rounded-t-md border border-b-0 border-[#dee2e6] bg-white" : "")}>{t}</button>
      ))}
    </div>
    <table className="mx-6 mt-6 w-[calc(100%-48px)] table-fixed text-right text-[15px] leading-7 text-black">
      <colgroup><col className="w-[33px]" /><col className="w-[216px]" /><col className="w-[145px]" /><col /></colgroup>
      <thead><tr className="h-[45px] border-b border-[#dee2e6]"><th className="px-2 pb-0.5 font-medium">#</th><th className="px-2 pb-0.5 font-medium">پلن</th><th className="px-2 pb-0.5 font-medium whitespace-nowrap">زمان اعتبار (روز)</th><th className="px-2 pb-0.5 font-medium">کد فعال‌سازی</th></tr></thead>
      <tbody><tr className="h-[45px] border-b border-[#dee2e6]"><th className="px-2 pb-0.5 font-medium">1</th><td className="px-2 pb-0.5 text-base whitespace-nowrap text-[#212529]">خرید دائمی کد فعالسازی</td><td className="px-2"><span className="flex h-[21px] w-[97px] items-center justify-center rounded-md bg-[#198754] text-[11px] font-bold whitespace-nowrap text-white">303 روز 12ساعت</span></td><td className="px-2 pb-0.5 text-base"><bdi dir="ltr">W8FU-SWX1-U6UZ-FP0G</bdi></td></tr></tbody>
    </table>
  </article>
);

const ProfileRow = ({ icon, children, className }: Kids & { icon: React.ReactNode; className: string }) => (
  <div className={"flex items-start pl-7 " + className}>
    <span className="ml-14 flex h-7 w-14 shrink-0 items-center justify-center text-[#6c757d]">{icon}</span>
    <div className="flex flex-1 flex-col items-center text-base leading-7 font-light text-[#212529]">{children}</div>
  </div>
);

const ProfileCard = () => (
  <article className={card + " h-[458px] w-[348px] shrink-0 pt-[30px]"}>
    <ProfileRow className="h-[46px]" icon={<svg viewBox="0 0 18 20" className="h-5 w-[18px]" fill="currentColor"><ellipse cx="9" cy="4.500" rx="3.300" ry="4.500" /><path d="M0 17q0-7 5.500-7L9 12.500 12.500 10Q18 10 18 17q-4 3-9 3t-9-3" /></svg>}>رضا صداقی</ProfileRow>
    <ProfileRow className="h-[72px]" icon={<svg viewBox="0 0 20 21" className="h-[21px] w-5" fill="currentColor" fillRule="evenodd"><path d="M0 3h3V0h3v3h8V0h3v3h3v18H0zM1.500 7.500v12h17v-12z" /><path d="M4 9h2v2H4zM7.500 9h2v2h-2zM11 9h2v2h-2zM14.500 9h2v2h-2zM4 12.500h2v2H4zM7.500 12.500h2v2h-2zM11 12.500h2v2h-2zM14.500 12.500h2v2h-2zM4 16h2v2H4zM7.500 16h2v2h-2zM11 16h2v2h-2zM14.500 16h2v2h-2z" /></svg>}>
      <span>تاریخ عضویت</span><bdi dir="ltr">2023-05-08 10:46:51</bdi>
    </ProfileRow>
    <ProfileRow className="h-[45px]" icon={<svg viewBox="0 0 20 14" className="h-3.5 w-5" fill="currentColor"><rect width="20" height="14" rx="1" /><path d="m2.500 2 7.500 7 7.500-7" fill="none" stroke="#f8f9fc" strokeWidth="2" /></svg>}><bdi dir="ltr">rsedaaghi@gmail.com</bdi></ProfileRow>
    <ProfileRow className="h-[74px]" icon={<svg viewBox="0 0 18 18" className="h-[18px] w-[18px]" fill="none" stroke="currentColor" strokeWidth="2.200"><path d="M9 1 1.500 9 9 17M2 9h11M13 1.200h4v15.600h-4" /></svg>}>
      <button type="button" className="mt-0.5 h-[42px] w-[110px] rounded-md border border-[#dee2e6] whitespace-nowrap">خروج از حساب</button>
    </ProfileRow>
    <table className="mx-1 w-[340px] table-fixed text-right text-[15px] leading-[29px] text-black">
      <colgroup><col className="w-[26px]" /><col className="w-[168px]" /><col /></colgroup>
      <thead><tr className="h-[68px] border-b border-[#dee2e6]"><th className="px-2 pb-2 align-bottom font-bold">#</th><th className="px-2 pb-2 align-bottom font-bold">پلن فعال</th><th className="px-2 pb-2 text-center align-bottom font-bold">مدت اعتبار<br />باقی‌مانده</th></tr></thead>
      <tbody><tr className="h-[74px] border-b border-[#dee2e6] align-top text-base leading-[29px] font-light"><th className="px-2 pt-2 font-medium">1</th><td className="pt-2 pr-2 pl-12 leading-[29px]">خرید دائمی کد فعالسازی</td>
        <td className="px-2 pt-2 text-center"><span className="block leading-[29px] whitespace-nowrap">303 روز 12ساعت</span>
          <div role="progressbar" aria-valuenow={83} aria-label="مدت اعتبار" className="flex h-4 overflow-hidden rounded-md bg-[#e9ecef]"><span className="bg-[#198754] text-center text-[12px] leading-3 font-normal text-white" style={{ width: "83%" }}>83%</span></div>
        </td></tr></tbody>
    </table>
  </article>
);

const linkCols = [
  { title: "درباره ما", links: ["ویژگی‌ها", "آشنایی با ما", "تماس با ما"] },
  { title: "نرم‌افزار", links: ["نرم‌افزار ویژه انواع مشاغل (عمومی)", "نرم‌افزار ویژه حمل و نقل بین‌المللی"] },
  { title: "منابع", links: ["مشمولین مالیاتی", "صدور صورتحساب برگشت از فروش", "قوانین سامانه مؤدیان"] },
];

const SiteFooter = () => (
  <footer className="mt-6 flex h-[360px] bg-[#228fd8] pr-[118px] text-white">
    {linkCols.map((c) => (
      <div key={c.title} className="w-[190px] shrink-0 pt-[51px] pr-3 pl-3">
        <h2 className="text-sm leading-7 font-bold">{c.title}</h2>
        <ul className="mt-3 text-sm leading-[26px]">{c.links.map((l) => <li key={l} className="mb-[7px]"><a href="#">{l}</a></li>)}</ul>
      </div>
    ))}
    <div className="flex w-[286px] shrink-0 flex-col items-center pt-[75px]">
      <h2 className="text-sm leading-7 font-bold whitespace-nowrap">مستر فاکتور در شبکه‌های اجتماعی:</h2>
      <div className="mt-[17px] flex gap-3 text-[#228fd8]">
        <a href="#" aria-label="LinkedIn" className="flex h-10 w-10 items-center justify-center rounded-lg bg-white"><FaLinkedinIn size={18} /></a>
        <a href="#" aria-label="Instagram" className="flex h-10 w-10 items-center justify-center rounded-lg bg-white"><FaInstagram size={18} /></a>
      </div>
      <a href="#" className="mt-[27px] flex items-center gap-1.5 text-sm leading-[26px]"><bdi dir="ltr">۰۲۱-۶۶۱۶۶۲۱۴</bdi><FaPhoneAlt size={15} /></a>
    </div>
    <div className="flex w-[146px] shrink-0 flex-col items-center pt-[108px] text-[#b3b3b3]">
      <svg viewBox="0 0 100 73" className="h-[73px] w-[100px]" fill="currentColor" fillRule="evenodd">
        <path d="M0 67Q8 50 29 44 30 22 39 9 46-1 57 0 71 3 69 19 65 38 37 49 34 62 45 63 57 63 62 47 64 42 67 43L73 38 80 35 86 34 78 43 79 49Q77 55 69 58 61 72 47 73 31 73 29 52 13 54 0 69zM37 43Q62 33 64 16 63 5 55 7 40 12 37 43" />
        <path d="m94 28 6 7.500-6 6.500-7-6.500z" />
      </svg>
      <span dir="ltr" className="mt-1 text-sm leading-4 font-bold">eNAMAD.ir</span>
      <svg viewBox="0 0 86 8" className="mt-0.5 h-2 w-[86px]" fill="currentColor"><path d="M0 8 3 0l3 8zM20 8l3-8 3 8zM40 8l3-8 3 8zM60 8l3-8 3 8zM80 8l3-8 3 8z" /></svg>
    </div>
    <div className="flex w-[190px] shrink-0 flex-col items-center pt-[117px]">
      <div className="flex h-[130px] w-20 flex-col items-center rounded-lg bg-linear-to-br from-[#fff200] to-[#ffc800] pt-[13px] text-[#242a56]">
        <svg viewBox="0 0 54 54" className="h-[54px] w-[54px]" fill="#242a56"><path d="M0 0h18L0 18zM54 54H36l18-18z" /><path d="M7.500 46.500 46.500 7.500" stroke="#242a56" strokeWidth="14" strokeLinecap="round" /></svg>
        <span className="mt-0.5 text-[10px] leading-4 whitespace-nowrap">پرداخت ایمن با</span>
        <span className="text-lg leading-4 font-bold whitespace-nowrap">زرین‌پال</span>
      </div>
    </div>
  </footer>
);

/* ---------- browser window ---------- */

const SideApp = ({ name, children }: Kids & { name: string }) => (
  <button type="button" aria-label={name} className="flex h-10 w-11 shrink-0 items-center justify-center"><svg viewBox="0 0 18 18" className="h-[18px] w-[18px]">{children}</svg></button>
);

const EdgeSidebar = () => (
  <aside className="flex w-11 shrink-0 flex-col items-center pb-0.5 text-white">
    <button type="button" aria-label="Bing" className="flex h-10 shrink-0 items-center">
      <svg viewBox="0 0 30 32" className="h-8 w-[30px]"><path d="M15 1.500a13.500 13.500 0 1 1 0 27H3q-1.500 0-1.500-1.500V15A13.500 13.500 0 0 1 15 1.500" fill="#152238" stroke="url(#bing)" strokeWidth="1.800" /><path d="m10.500 6 3.500 1.500V18l3.500-1.800-1.700-4.200L22 14.500q1.500 4-2 6L14 24q-3.500-1-3.500-4z" fill="url(#bing)" /></svg>
    </button>
    <SideApp name="Search"><path d="m10 10 7 7" stroke="#b54ae8" strokeWidth="2.600" /><circle cx="7" cy="7" r="5.500" fill="#2d6f9c" stroke="#b9c3ca" strokeWidth="1.600" /></SideApp>
    <SideApp name="Shopping"><path d="m1 10 8.500-8.500 6.500.5 1 6.500L8.500 17z" fill="#5b8df5" /><circle cx="13.500" cy="4.500" r="1.800" fill="#2b4f9e" stroke="#f7c52b" strokeWidth="1.200" /></SideApp>
    <SideApp name="Tools"><path d="M6 4.500V2.500h6v2" fill="none" stroke="#999" strokeWidth="1.600" /><rect y="4.500" width="18" height="12" rx="1" fill="#e0572b" /><path d="M0 9h18v1.500H0z" fill="#a8381a" /><rect x="7.500" y="8" width="3" height="4" fill="#ccc" /></SideApp>
    <SideApp name="Games"><path d="M10 1h2v2h1.500V1h2v2H17V1h1v6h-1.200l.7 7H11l1-7h-2z" fill="#a64de8" /><path d="M6 4a3 3 0 0 1 1.500 5.500L9 14l2 1v3H0v-3l2.500-1L4 9.500A3 3 0 0 1 6 4" fill="#a5a5a5" /></SideApp>
    <SideApp name="Microsoft 365"><path d="M9 0 2 4v9l4 2.500V7l5-3z" fill="#4b8ff0" /><path d="m10 1 6.500 3.500V12L12 10V6L8 5z" fill="#63c5f2" /><path d="M16.500 10v3.500L9.500 18l-6-3.500 6-1.500z" fill="#a46de0" /></SideApp>
    <SideApp name="Outlook"><rect x="6" y="0" width="11" height="13" fill="#34b0ee" /><path d="M5 9h13v9H5z" fill="#1280d2" /><rect y="4" width="11" height="11" rx="1" fill="#0a62b8" /><circle cx="5.500" cy="9.500" r="2.700" fill="none" stroke="#fff" strokeWidth="1.600" /></SideApp>
    <SideApp name="Drop"><path d="m0 6 18-3L7 10z" fill="#35a8ea" /><path d="M18 3 12 16 8 11z" fill="#2a86d8" /><path d="M2.500 8.500 18 3 7 11 5 15z" fill="#f2b91f" /></SideApp>
    <button type="button" aria-label="Customize sidebar" className="mt-2 flex h-8 items-center"><Plus size={18} strokeWidth={1.200} /></button>
    <hr className="mt-auto w-7 border-[#6b6b6b]" />
    <button type="button" aria-label="Hide sidebar" className="mt-1 flex h-[38px] items-center"><PanelRight size={16} strokeWidth={1.500} /></button>
    <button type="button" aria-label="Settings" className="flex h-10 items-center"><Settings size={18} strokeWidth={1.500} /></button>
  </aside>
);

const Browser = () => (
  <div className="flex min-h-0 flex-1 flex-col bg-[#3b3b3b] text-white">
    <header className="flex h-8 shrink-0 bg-[#202020]">
      <button type="button" aria-label="Tab actions" className="flex w-[47px] items-center justify-center">
        <svg viewBox="0 0 16 16" className="h-4 w-4" fill="none" stroke="#fff" strokeWidth="1.300"><rect x="1.500" y="1.500" width="13" height="13" rx="2" /><path d="M1.500 3.500h13M5.500 5v9" /><path d="M2 2.500h12v2H2z" fill="#fff" /></svg>
      </button>
      <div className="flex w-[240px] items-center rounded-t-md bg-[#3b3b3b] pr-2 pl-3.5">
        <svg viewBox="0 0 10 16" className="h-4 w-2.5" fill="none" stroke="#1d8db8" strokeWidth="1.700"><circle cx="7.500" cy="2" r="1.200" /><path d="M3.500 5.500Q1 5.500 1 8v4.500Q1 15 5 15t4-2.500T6.500 10 4 12M4 5.500h2v4q2.500 0 3-3" /></svg>
        <span dir="rtl" className="flex-1 text-xs">داشبورد – مستر فاکتور</span>
        <button type="button" aria-label="Close tab" className="ml-2"><X size={14} strokeWidth={1.500} /></button>
      </div>
      <button type="button" aria-label="New tab" className="ml-2"><Plus size={18} strokeWidth={1.400} /></button>
      <WinControls className="" />
    </header>
    <div className="flex min-h-0 flex-1">
      <div className="flex min-w-0 flex-1 flex-col">
        <div className="flex h-[38px] shrink-0 items-center pl-1.5">
          <ToolBtn name="Back"><ArrowLeft size={18} strokeWidth={1.300} /></ToolBtn>
          <ToolBtn name="Refresh"><RotateCw size={17} strokeWidth={1.400} /></ToolBtn>
          <div className="mx-1.5 flex h-[30px] min-w-0 flex-1 items-center rounded-full bg-[#2b2b2b] pr-[5px] pl-[18px] text-[#8a8a8a]">
            <Lock size={16} strokeWidth={1.500} color="#fff" />
            <div role="textbox" aria-label="Address" className="ml-[15px] flex-1 text-[13px] text-[#9a9a9a]">https://<span className="text-white">mrfactor.ir</span>/dashboard/</div>
            <ToolBtn narrow name="Passwords"><KeyRound size={16} strokeWidth={1.300} /></ToolBtn>
            <ToolBtn narrow name="Translate"><span className="[font-family:'Open_Sans','Noto_Sans_CJK_JP',sans-serif] text-xs">aあ</span></ToolBtn>
            <ToolBtn narrow name="Read aloud"><svg viewBox="0 0 18 16" className="h-4 w-[18px]" fill="none" stroke="currentColor" strokeWidth="1.200"><path d="M1 15 6 2l5 13M3 10.500h6M11.500 4q1.500 1.500 1 4M13.500 1.500q3 3 2 7.500" /></svg></ToolBtn>
            <ToolBtn narrow name="Favorite"><Star size={17} strokeWidth={1.300} /></ToolBtn>
          </div>
          <ToolBtn name="Extension"><svg viewBox="0 0 18 14" className="h-3.5 w-[18px]" fill="#b5b5b5"><circle cx="8" cy="4" r="4" /><circle cx="4" cy="9.500" r="4" /><circle cx="12" cy="9" r="5" /><circle cx="12.500" cy="9.500" r="2.200" fill="none" stroke="#555" /><circle cx="4" cy="9.500" r="1.800" fill="none" stroke="#555" /></svg></ToolBtn>
          <ToolBtn name="Extensions"><svg viewBox="0 0 18 18" className="h-[18px] w-[18px]" fill="none" stroke="#fff" strokeWidth="1.200"><path d="M5.500 3h2a2 2 0 0 1 4 0h2q1.500 0 1.500 1.500V7h-.5a2 2 0 0 0 0 4h.5v2.500q0 1.500-1.500 1.500h-2a2 2 0 0 1-4 0h-2Q4 15 4 13.500V11a2 2 0 0 1 0-4V4.500Q4 3 5.500 3z" /></svg></ToolBtn>
          <span className="mr-[3px] h-5 w-px bg-[#6b6b6b]" />
          <ToolBtn name="Split screen"><Columns2 size={17} strokeWidth={1.400} /></ToolBtn>
          <ToolBtn name="Favorites"><svg viewBox="0 0 18 16" className="h-4 w-[18px]" fill="none" stroke="#fff" strokeWidth="1.200"><path d="M12 6h-1L8 1 6 5.500 1 6l3.700 3.600L3.800 15 8 12.500M11.500 6H17M10 10h7M12 14h5" /></svg></ToolBtn>
          <ToolBtn name="Collections"><svg viewBox="0 0 18 18" className="h-[18px] w-[18px]" fill="none" stroke="#fff" strokeWidth="1.200"><rect x="6" y="5.500" width="11" height="11" rx="2" /><path d="M11.500 8.500v5M9 11h5M4 12.500l-1-.5q-1-1-1.300-4L1.400 4Q1.200 2 3 1.700L9.500 1q2 0 2.500 2" /></svg></ToolBtn>
          <ToolBtn name="Browser essentials"><span className="relative"><HeartPulse size={18} strokeWidth={1.300} /><i className="absolute right-0 bottom-0 h-2 w-2 rounded-full bg-[#107c10]" /></span></ToolBtn>
          <ToolBtn name="Profile"><span className="relative ml-1"><svg viewBox="0 0 24 24" className="h-6 w-6"><circle cx="12" cy="12" r="12" fill="#d8d3ce" /><circle cx="12" cy="9.500" r="4.700" fill="#8b8783" /><path d="M4 20q1.500-5 8-5t8 5q-3.500 4-8 4t-8-4" fill="#8b8783" /></svg><i className="absolute -top-0.5 -right-0.5 h-2 w-2 rounded-full bg-[#f6a19a]" /></span></ToolBtn>
          <ToolBtn name="Settings and more"><Ellipsis size={18} strokeWidth={2} className="ml-1" /></ToolBtn>
          <span className="w-[3px]" />
        </div>
        <nav aria-label="Bookmarks" className="flex h-[34px] shrink-0 items-center gap-[17px] pl-3.5 text-[11px]">
          {bookmarks.map((b, i) => <a key={i} href="#" className="flex shrink-0 items-center gap-2 whitespace-nowrap">{b.icon}{b.label && <span className={b.width}>{b.label}</span>}</a>)}
          <button type="button" aria-label="More bookmarks" className="mr-4 ml-auto"><ChevronRight size={18} strokeWidth={1.400} /></button>
        </nav>
        <div className="mb-1 ml-1 flex min-h-0 flex-1 overflow-hidden rounded-lg bg-white">
          <div className="min-w-0 flex-1 overflow-hidden bg-[#f3f3f9]">
            <AdminBar />
            <div dir="rtl" className="[font-family:Roboto,'Noto_Sans_Arabic','DejaVu_Sans',sans-serif]">
              <main className="mx-auto flex max-w-[1093px] items-start gap-6 pt-[22px]">
                <ProfileCard />
                <PlansCard />
              </main>
              <SiteFooter />
            </div>
          </div>
          <div className="flex w-[15px] shrink-0 flex-col items-center bg-[#fcfcfc] py-2.5">
            <svg viewBox="0 0 9 7" className="h-[7px] w-[9px]" fill="#8a8a8a"><path d="M4.500 0 9 7H0z" /></svg>
            <span className="mt-[82px] h-[507px] w-[9px] rounded-full bg-[#8a8a8a]" />
            <svg viewBox="0 0 9 7" className="mt-auto h-[7px] w-[9px]" fill="#8a8a8a"><path d="M0 0h9L4.500 7z" /></svg>
          </div>
        </div>
      </div>
      <EdgeSidebar />
    </div>
  </div>
);

export default function App() {
  return (
    <div className="grid min-h-screen w-full grid-cols-[4fr_3fr] bg-black [font-family:'Open_Sans','Noto_Sans_Arabic','DejaVu_Sans',sans-serif]">
      <Defs />
      <Explorer />
      <section className="flex h-[83.3333vh] min-w-0 flex-col">
        <Browser />
        <Taskbar className="bg-[linear-gradient(90deg,#251e33_0%,#2a1c33_28%,#42151b_45%,#4a1412_65%,#3a1b14_88%,#331c1b_100%)]">
          <div className="mr-[23px]"><Clock /></div>
        </Taskbar>
      </section>
    </div>
  );
}
